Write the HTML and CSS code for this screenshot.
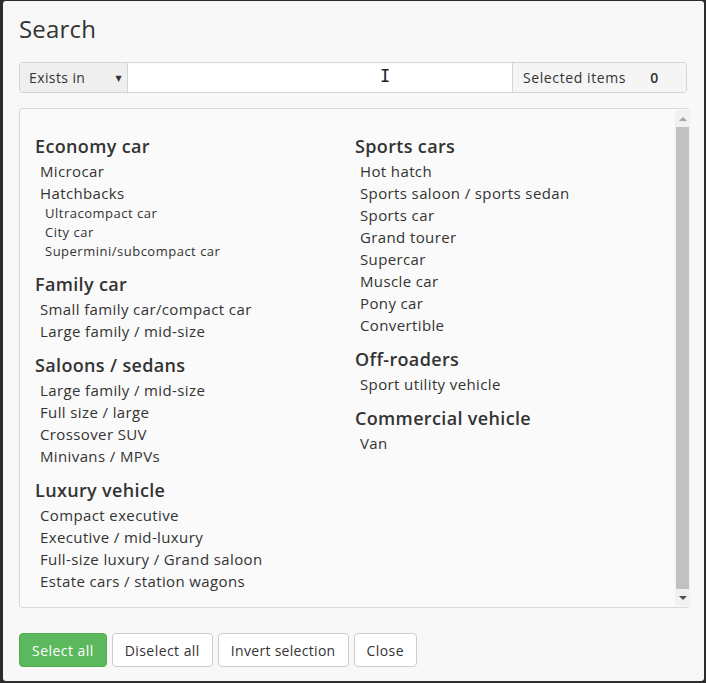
FILE: index.html
```html
<!DOCTYPE html>
<html>
<head>
<meta charset="utf-8">
<link rel="stylesheet" href="styles.css">
</head>
<body>
<div class="modal">
  <h1 class="title">Search</h1>
  <div class="input-group">
    <div class="select">Exists in<span class="caret">▼</span></div>
    <div class="search-input"><span class="cursor">I</span></div>
    <div class="addon"><span>Selected items</span><span class="count">0</span></div>
  </div>
  <div class="list-box">
    <div class="list-content">
      <div class="col">
        <div class="group">
          <div class="heading">Economy car</div>
          <div class="item">Microcar</div>
          <div class="item">Hatchbacks</div>
          <div class="sub">Ultracompact car</div>
          <div class="sub">City car</div>
          <div class="sub">Supermini/subcompact car</div>
        </div>
        <div class="group">
          <div class="heading">Family car</div>
          <div class="item">Small family car/compact car</div>
          <div class="item">Large family / mid-size</div>
        </div>
        <div class="group">
          <div class="heading">Saloons / sedans</div>
          <div class="item">Large family / mid-size</div>
          <div class="item">Full size / large</div>
          <div class="item">Crossover SUV</div>
          <div class="item">Minivans / MPVs</div>
        </div>
        <div class="group">
          <div class="heading">Luxury vehicle</div>
          <div class="item">Compact executive</div>
          <div class="item">Executive / mid-luxury</div>
          <div class="item">Full-size luxury / Grand saloon</div>
          <div class="item">Estate cars / station wagons</div>
        </div>
      </div>
      <div class="col">
        <div class="group">
          <div class="heading">Sports cars</div>
          <div class="item">Hot hatch</div>
          <div class="item">Sports saloon / sports sedan</div>
          <div class="item">Sports car</div>
          <div class="item">Grand tourer</div>
          <div class="item">Supercar</div>
          <div class="item">Muscle car</div>
          <div class="item">Pony car</div>
          <div class="item">Convertible</div>
        </div>
        <div class="group">
          <div class="heading">Off-roaders</div>
          <div class="item">Sport utility vehicle</div>
        </div>
        <div class="group">
          <div class="heading">Commercial vehicle</div>
          <div class="item">Van</div>
        </div>
      </div>
    </div>
    <div class="scrollbar">
      <div class="arrow up"></div>
      <div class="thumb"></div>
      <div class="arrow down"></div>
    </div>
  </div>
  <div class="buttons">
    <button class="btn btn-green">Select all</button>
    <button class="btn">Diselect all</button>
    <button class="btn btn-invert">Invert selection</button>
    <button class="btn">Close</button>
  </div>
</div>
</body>
</html>
```
FILE: styles.css
```css
html, body {
  margin: 0;
  padding: 0;
  background: #2c2c2c;
  font-family: "Open Sans", "DejaVu Sans", sans-serif;
  color: #333;
}
.modal {
  margin: 1px 2px 2px 3px;
  height: 680px;
  box-sizing: border-box;
  background: #f8f8f8;
  border-radius: 3px;
  padding: 0 15px 0 16px;
  display: flex;
  flex-direction: column;
}
.title {
  margin: 0;
  font-weight: 400;
  font-size: 24px;
  line-height: 32px;
  padding-top: 12px;
  height: 61px;
  box-sizing: border-box;
  color: #333;
  letter-spacing: 0.2px;
}
.input-group {
  display: flex;
  height: 31px;
  margin-right: 2px;
  border: 1px solid #d5d5d5;
  border-radius: 3px;
  box-sizing: border-box;
  font-size: 14px;
  letter-spacing: 0.4px;
}
.select {
  width: 108px;
  background: #efefef;
  border-right: 1px solid #d5d5d5;
  box-sizing: border-box;
  padding-left: 9px;
  display: flex;
  align-items: center;
  position: relative;
  padding-bottom: 1px;
}
.caret {
  position: absolute;
  right: 5px;
  font-size: 8px;
  color: #333;
}
.search-input {
  flex: 1;
  background: #fff;
  position: relative;
}
.cursor {
  position: absolute;
  left: 252px;
  top: 3px;
  font-family: "DejaVu Sans Mono", monospace;
  font-size: 17px;
  font-weight: 300;
  color: #222;
}
.addon {
  width: 174px;
  background: #f5f5f5;
  border-left: 1px solid #d5d5d5;
  box-sizing: border-box;
  display: flex;
  align-items: center;
  padding-left: 10px;
  padding-bottom: 1px;
  letter-spacing: 0.6px;
}
.count {
  margin-left: 24px;
  font-weight: 600;
}
.list-box {
  margin-top: 15px;
  height: 500px;
  border: 1px solid #d9d9d9;
  border-radius: 3px;
  background: #fafafa;
  display: flex;
  box-sizing: border-box;
}
.list-content {
  flex: 1;
  display: flex;
  padding: 24px 0 0 15px;
}
.col {
  width: 320px;
}
.group {
  margin-bottom: 10px;
}
.heading {
  font-size: 18px;
  font-weight: 600;
  line-height: 27px;
  color: #333;
  letter-spacing: 0.35px;
}
.item {
  font-size: 15px;
  line-height: 22px;
  padding-left: 5px;
  color: #333;
  letter-spacing: 0.38px;
}
.sub {
  font-size: 13px;
  line-height: 19px;
  padding-left: 10px;
  color: #333;
  letter-spacing: 0.5px;
}
.scrollbar {
  width: 15px;
  margin: 1px 1px 1px 0;
  background: #f1f1f1;
  display: flex;
  flex-direction: column;
  align-items: center;
}
.arrow {
  height: 17px;
  width: 15px;
  display: flex;
  justify-content: center;
  align-items: center;
}
.arrow::before {
  content: "";
  border-left: 4px solid transparent;
  border-right: 4px solid transparent;
}
.up::before { border-bottom: 4px solid #a3a8a3; }
.down::before { border-top: 4px solid #505050; }
.thumb {
  flex: 1;
  width: 13px;
  background: #c1c1c1;
}
.buttons {
  margin-top: 25px;
  display: flex;
  gap: 5px;
}
.btn {
  font-family: inherit;
  font-size: 14px;
  letter-spacing: 0.45px;
  height: 34px;
  padding: 0 12px;
  border: 1px solid #ccc;
  border-radius: 4px;
  background: #fff;
  color: #333;
  margin: 0;
}
.btn-invert {
  letter-spacing: 0.3px;
}
.btn-green {
  background: #5cb85c;
  border-color: #4cae4c;
  color: #fff;
}
```
